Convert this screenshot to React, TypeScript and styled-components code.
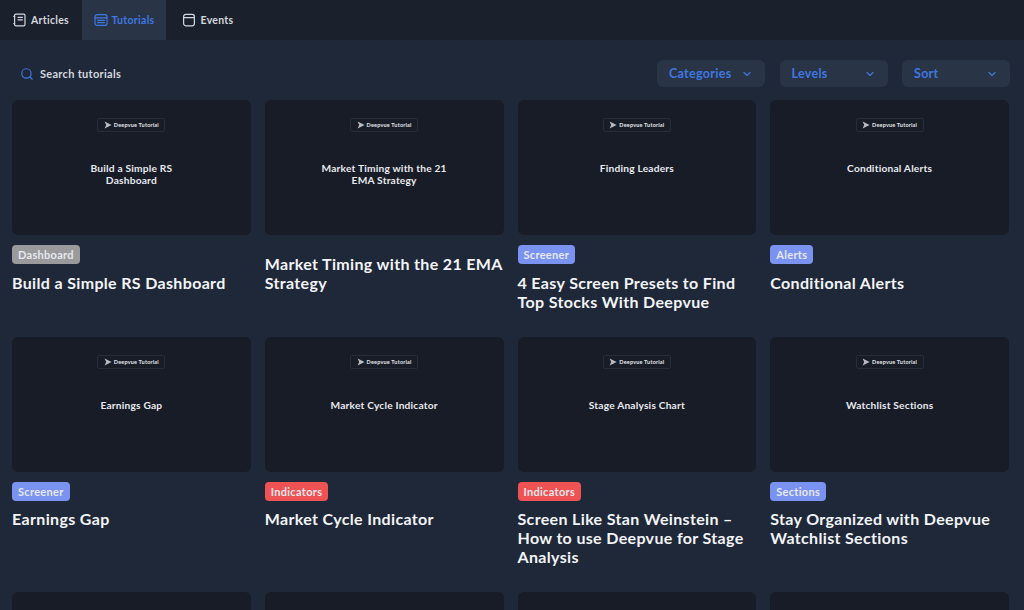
import { ChevronDown, Search } from 'lucide-react';
import { styled, createGlobalStyle } from 'styled-components';

type Tutorial = {
  thumb: string;
  tag?: 'Dashboard' | 'Screener' | 'Alerts' | 'Indicators' | 'Sections';
  title?: string;
};

const tutorials: Tutorial[] = [
  { thumb: 'Build a Simple RS Dashboard', tag: 'Dashboard', title: 'Build a Simple RS Dashboard' },
  { thumb: 'Market Timing with the 21 EMA Strategy', title: 'Market Timing with the 21 EMA Strategy' },
  { thumb: 'Finding Leaders', tag: 'Screener', title: '4 Easy Screen Presets to Find Top Stocks With Deepvue' },
  { thumb: 'Conditional Alerts', tag: 'Alerts', title: 'Conditional Alerts' },
  { thumb: 'Earnings Gap', tag: 'Screener', title: 'Earnings Gap' },
  { thumb: 'Market Cycle Indicator', tag: 'Indicators', title: 'Market Cycle Indicator' },
  { thumb: 'Stage Analysis Chart', tag: 'Indicators', title: 'Screen Like Stan Weinstein – How to use Deepvue for Stage Analysis' },
  { thumb: 'Watchlist Sections', tag: 'Sections', title: 'Stay Organized with Deepvue Watchlist Sections' },
  { thumb: '' },
  { thumb: '' },
  { thumb: '' },
  { thumb: '' },
];

const tagColors = {
  Dashboard: '#9a9a9c',
  Screener: '#7b93f0',
  Alerts: '#7b93f0',
  Indicators: '#ee5253',
  Sections: '#7b93f0',
};

function ArticlesIcon() {
  return (
    <svg width="14" height="14" viewBox="0 0 14 14" fill="none" stroke="currentColor" strokeWidth="1.2" strokeLinecap="round" strokeLinejoin="round">
      <path d="M3 1.2h7.8a1.2 1.2 0 0 1 1.2 1.2v9.2a1.2 1.2 0 0 1-1.2 1.2H3a1.4 1.4 0 0 1-1.4-1.4V2.6A1.4 1.4 0 0 1 3 1.2z" />
      <path d="M5 4.4h4.4M5 6.8h4.4M1.6 3.4H.8M1.6 10.6H.8" />
    </svg>
  );
}

function TutorialsIcon() {
  return (
    <svg width="14" height="14" viewBox="0 0 14 14" fill="none" stroke="currentColor" strokeWidth="1.2" strokeLinecap="round" strokeLinejoin="round">
      <rect x="1" y="1.6" width="12" height="10.8" rx="2.2" />
      <path d="M1 4.8h12M3.6 7.4h6.8M3.6 9.6h6.8" />
    </svg>
  );
}

function EventsIcon() {
  return (
    <svg width="14" height="14" viewBox="0 0 14 14" fill="none" stroke="currentColor" strokeWidth="1.2" strokeLinecap="round" strokeLinejoin="round">
      <rect x="1.6" y="1.4" width="10.8" height="11.4" rx="2.2" />
      <path d="M1.6 4.6h10.8" />
    </svg>
  );
}

function PlayMark() {
  return (
    <svg width="8" height="8" viewBox="0 0 8 8">
      <path d="M0.6 0.4 7.6 4 0.6 7.6 2.2 4z" fill="#b9bcc2" />
    </svg>
  );
}

export default function App() {
  return (
    <Page>
      <GlobalStyle />
      <Nav>
        <Tab $width={82}>
          <ArticlesIcon />
          Articles
        </Tab>
        <Tab $width={84} $active>
          <TutorialsIcon />
          Tutorials
        </Tab>
        <Tab $width={84}>
          <EventsIcon />
          Events
        </Tab>
      </Nav>
      <Toolbar>
        <SearchBox>
          <Search size={14} color="#3f78e0" strokeWidth={2} />
          Search tutorials
        </SearchBox>
        <Filters>
          <Filter>
            Categories
            <ChevronDown size={12} strokeWidth={2.2} />
          </Filter>
          <Filter>
            Levels
            <ChevronDown size={12} strokeWidth={2.2} />
          </Filter>
          <Filter>
            Sort
            <ChevronDown size={12} strokeWidth={2.2} />
          </Filter>
        </Filters>
      </Toolbar>
      <Grid>
        {tutorials.map((item, index) => (
          <Card key={index}>
            <Thumb>
              <ThumbBadge>
                <PlayMark />
                Deepvue Tutorial
              </ThumbBadge>
              {item.thumb && <ThumbTitle>{item.thumb}</ThumbTitle>}
            </Thumb>
            <CardBody>
              {item.tag && <Tag $color={tagColors[item.tag]}>{item.tag}</Tag>}
              {item.title && <Title>{item.title}</Title>}
            </CardBody>
          </Card>
        ))}
      </Grid>
    </Page>
  );
}

const GlobalStyle = createGlobalStyle`
  html, body {
    margin: 0;
    height: 610px;
    overflow: hidden;
    background: #1f2838;
  }
  * {
    box-sizing: border-box;
  }
`;

const Page = styled.div`
  width: 1024px;
  height: 610px;
  overflow: hidden;
  background: #1f2838;
  font-family: 'Lato', 'Noto Sans', sans-serif;
  color: #f2f4f7;
`;

const Nav = styled.nav`
  height: 40px;
  display: flex;
  background: #1a202c;
`;

const Tab = styled.div<{ $active?: boolean; $width: number }>`
  width: ${({ $width }) => $width}px;
  padding-bottom: 1px;
  display: flex;
  align-items: center;
  justify-content: center;
  gap: 4px;
  font-size: 10.5px;
  font-weight: 700;
  letter-spacing: 0.3px;
  color: ${({ $active }) => ($active ? '#3f78e0' : '#d5d8de')};
  background: ${({ $active }) => ($active ? '#2a3447' : 'transparent')};
`;

const Toolbar = styled.div`
  height: 60px;
  display: flex;
  align-items: center;
  justify-content: space-between;
  padding: 7px 14px 0 20px;
`;

const SearchBox = styled.div`
  display: flex;
  align-items: center;
  gap: 6px;
  font-size: 11px;
  font-weight: 700;
  letter-spacing: 0.3px;
  color: #d5d8de;
`;

const Filters = styled.div`
  display: flex;
  gap: 14.5px;
`;

const Filter = styled.div`
  width: 108px;
  height: 27px;
  display: flex;
  align-items: center;
  justify-content: space-between;
  padding: 0 12px;
  border-radius: 6px;
  background: #2a3447;
  color: #3f78e0;
  font-size: 12.5px;
  font-weight: 700;
  letter-spacing: 0.3px;
`;

const Grid = styled.div`
  display: grid;
  grid-template-columns: repeat(4, 1fr);
  column-gap: 14px;
  row-gap: 26px;
  padding: 0 15px 0 12px;
`;

const Card = styled.article`
  min-width: 0;
`;

const Thumb = styled.div`
  height: 135px;
  display: flex;
  flex-direction: column;
  align-items: center;
  padding-top: 18px;
  border-radius: 6px;
  background: #171c27;
`;

const ThumbBadge = styled.div`
  height: 14px;
  width: 68px;
  flex: none;
  display: flex;
  align-items: center;
  justify-content: center;
  gap: 2px;
  border: 1px solid #262c39;
  border-radius: 2px;
  font-size: 5.5px;
  font-weight: 700;
  white-space: nowrap;
  letter-spacing: 0.2px;
  color: #e4e6ea;
`;

const ThumbTitle = styled.div`
  width: 130px;
  margin-top: 30px;
  font-size: 10.2px;
  font-weight: 700;
  line-height: 12px;
  letter-spacing: 0.2px;
  text-align: center;
  color: #e8eaee;
`;

const CardBody = styled.div`
  padding-top: 10px;
`;

const Tag = styled.span<{ $color: string }>`
  display: inline-block;
  height: 19px;
  padding: 0 6px;
  border-radius: 4px;
  background: ${({ $color }) => $color};
  font-size: 11px;
  font-weight: 700;
  line-height: 19px;
  letter-spacing: 0.3px;
  color: #e6e8ee;
  vertical-align: top;
`;

const Title = styled.h3`
  margin: 8.5px 0 0;
  font-size: 16px;
  font-weight: 700;
  line-height: 19px;
  letter-spacing: 0.34px;
  color: #f2f4f7;
`;
